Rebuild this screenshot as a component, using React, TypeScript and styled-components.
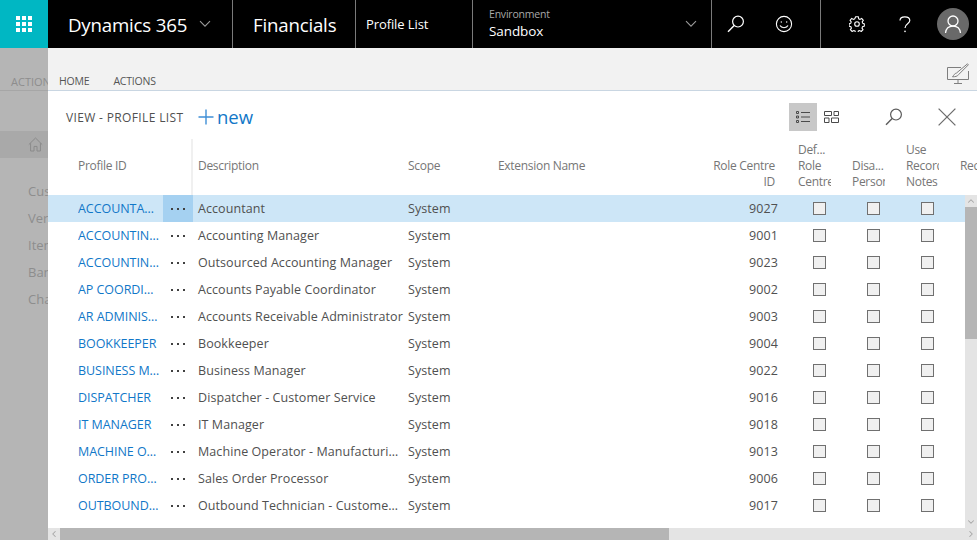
import React from 'react';
import styled, { createGlobalStyle } from 'styled-components';
import { ChevronDown, ChevronLeft, ChevronRight, ChevronUp } from 'lucide-react';

const FONT = '"Open Sans", "Noto Sans", "Liberation Sans", sans-serif';
const COLUMNS = '30px 85px 30px 215px 90px 200px 80px 14px 54px 54px 54px 23px';

/* Style Section */

const GlobalStyle = createGlobalStyle`
  html, body {
    margin: 0;
    height: 100%;
    overflow: hidden;
    background: #ffffff;
    font-family: ${FONT};
  }
  * {
    box-sizing: border-box;
  }
`;

const Page = styled.div`
  width: 977px;
  height: 540px;
  display: flex;
  flex-direction: column;
  overflow: hidden;
`;

const TopBar = styled.header`
  height: 48px;
  flex: none;
  display: flex;
  background: #000000;
  color: #ffffff;
`;

const AppsButton = styled.div`
  width: 48px;
  background: #00b7c3;
  display: flex;
  align-items: center;
  justify-content: center;
`;

const BarCell = styled.div<{ $width: number; $left?: number; $divider?: boolean }>`
  width: ${(p) => p.$width}px;
  padding-left: ${(p) => p.$left ?? 0}px;
  display: flex;
  align-items: center;
  border-right: ${(p) => (p.$divider ? '1px solid #7a7a7a' : 'none')};
  flex: none;
`;

const BrandText = styled.span`
  font-size: 18.7px;
  letter-spacing: -0.2px;
`;

const PageName = styled.span`
  font-size: 13px;
  font-weight: 500;
  letter-spacing: -0.1px;
`;

const EnvironmentBox = styled.div`
  flex: 1;
  display: flex;
  flex-direction: column;
`;

const EnvironmentLabel = styled.span`
  font-size: 10.5px;
  line-height: 14px;
  color: #a8a8a8;
  letter-spacing: -0.2px;
`;

const EnvironmentValue = styled.span`
  font-size: 13.5px;
  line-height: 20px;
  letter-spacing: -0.1px;
`;

const Avatar = styled.div`
  width: 32px;
  height: 32px;
  border-radius: 50%;
  background: #696969;
  display: flex;
  align-items: center;
  justify-content: center;
`;

const IconSlot = styled.div<{ $width: number; $before?: number }>`
  width: ${(p) => p.$width}px;
  margin-left: ${(p) => p.$before ?? 0}px;
  display: flex;
  justify-content: center;
  align-items: center;
  flex: none;
`;

const Workspace = styled.div`
  flex: 1;
  display: flex;
  min-height: 0;
`;

const Sidebar = styled.aside`
  width: 48px;
  flex: none;
  background: #b5b5b5;
  color: #8d8d8d;
  overflow: hidden;
  display: flex;
  flex-direction: column;
`;

const SideTabs = styled.div`
  height: 43px;
  flex: none;
  padding: 26px 0 0 11px;
  font-size: 11px;
  line-height: 15px;
  white-space: nowrap;
  border-bottom: 1px solid #a6a6a6;
`;

const SideHome = styled.div`
  height: 27px;
  margin-top: 40px;
  flex: none;
  background: #a9a9a9;
  display: flex;
  align-items: center;
  padding-left: 28px;
`;

const SideList = styled.div`
  margin-top: 20px;
  display: flex;
  flex-direction: column;
`;

const SideItem = styled.div`
  height: 27px;
  line-height: 27px;
  padding-left: 28px;
  font-size: 13px;
  white-space: nowrap;
`;

const Main = styled.main`
  flex: 1;
  min-width: 0;
  display: flex;
  flex-direction: column;
`;

const Ribbon = styled.div`
  height: 43px;
  flex: none;
  background: #f2f2f2;
  border-bottom: 1px solid #c9d6e2;
  display: flex;
  align-items: flex-end;
  padding: 0 8px 0 11px;
  gap: 24px;
  color: #555555;
`;

const RibbonTab = styled.span`
  font-size: 10.5px;
  line-height: 15px;
  letter-spacing: -0.2px;
  padding-bottom: 1px;
`;

const RibbonTool = styled.div`
  margin-left: auto;
  align-self: flex-end;
  margin-bottom: 5px;
  display: flex;
`;

const Toolbar = styled.div`
  height: 46px;
  flex: none;
  display: flex;
  align-items: center;
  padding: 6px 0 0 18px;
`;

const ViewTitle = styled.span`
  font-size: 12px;
  letter-spacing: 0.35px;
  color: #505050;
  width: 132px;
`;

const NewButton = styled.div`
  display: flex;
  align-items: center;
  gap: 3px;
  color: #1177c8;
  font-size: 18.5px;
  line-height: 24px;
`;

const ToolGroup = styled.div`
  margin-left: auto;
  padding-right: 21px;
  display: flex;
  align-items: center;
`;

const ViewToggle = styled.div<{ $active?: boolean }>`
  width: 28px;
  height: 28px;
  background: ${(p) => (p.$active ? '#c8c8c8' : 'transparent')};
  display: flex;
  align-items: center;
  justify-content: center;
`;

const HeaderRow = styled.div`
  height: 58px;
  flex: none;
  display: grid;
  grid-template-columns: ${COLUMNS};
  align-items: center;
  overflow: hidden;
  color: #767676;
  font-size: 12px;
  line-height: 16px;
`;

const HeaderCell = styled.div<{ $col: number; $right?: boolean; $pad?: number; $clip?: number; $low?: boolean }>`
  grid-column: ${(p) => p.$col};
  grid-row: 1;
  text-align: ${(p) => (p.$right ? 'right' : 'left')};
  padding-left: ${(p) => p.$pad ?? 0}px;
  padding-right: ${(p) => (p.$right ? 3 : 0)}px;
  white-space: pre-line;
  letter-spacing: -0.3px;
  overflow: hidden;
  ${(p) => (p.$low ? 'align-self: end; margin-bottom: 5px;' : '')}
  ${(p) => (p.$clip ? `max-width: ${p.$clip}px; margin-left: 6px; padding-left: 0; white-space: pre;` : '')}
`;

const FreezeLine = styled.div`
  grid-column: 3;
  grid-row: 1;
  justify-self: end;
  width: 2px;
  height: 56px;
  margin-top: 2px;
  background: #f0f0f0;
`;

const TableArea = styled.div`
  flex: 1;
  min-height: 0;
  display: flex;
`;

const Rows = styled.div`
  flex: 1;
  min-width: 0;
  overflow: hidden;
`;

const Row = styled.div<{ $selected?: boolean }>`
  height: 27px;
  display: grid;
  grid-template-columns: ${COLUMNS};
  align-items: center;
  background: ${(p) => (p.$selected ? '#cde6f7' : 'transparent')};
  color: #505050;
  font-size: 12.5px;
  letter-spacing: 0.08px;
`;

const IdCell = styled.a`
  grid-column: 2;
  color: #1177c8;
  letter-spacing: -0.05px;
  white-space: nowrap;
  overflow: hidden;
`;

const DotsCell = styled.div<{ $selected?: boolean }>`
  grid-column: 3;
  height: 27px;
  display: flex;
  align-items: center;
  justify-content: center;
  gap: 4px;
  background: ${(p) => (p.$selected ? '#a5d1f1' : 'transparent')};
`;

const Dot = styled.span`
  width: 2px;
  height: 2px;
  background: #404040;
`;

const TextCell = styled.div<{ $col: number; $pad?: number }>`
  grid-column: ${(p) => p.$col};
  padding-left: ${(p) => p.$pad ?? 0}px;
  white-space: nowrap;
  overflow: hidden;
`;

const NumberCell = styled.div`
  grid-column: 7;
  text-align: right;
`;

const CheckCell = styled.div<{ $col: number }>`
  grid-column: ${(p) => p.$col};
  display: flex;
  justify-content: center;
`;

const CheckBox = styled.span`
  width: 13px;
  height: 13px;
  border: 1px solid #707070;
  background: #f0f0f0;
`;

const VerticalBar = styled.div`
  width: 12px;
  flex: none;
  background: #e4e4e4;
  display: flex;
  flex-direction: column;
`;

const HorizontalBar = styled.div`
  height: 12px;
  flex: none;
  background: #e4e4e4;
  display: flex;
`;

const ArrowButton = styled.div`
  width: 12px;
  height: 12px;
  flex: none;
  display: flex;
  align-items: center;
  justify-content: center;
  color: #a6a6a6;
`;

const VerticalThumb = styled.div`
  height: 132px;
  background: #b5b5b5;
`;

const HorizontalThumb = styled.div`
  width: 609px;
  background: #b5b5b5;
`;

const Spacer = styled.div`
  flex: 1;
`;

const Waffle = () => (
  <svg width="16" height="16" viewBox="0 0 16 16" fill="#ffffff">
    {[0, 6, 12].flatMap((y) =>
      [0, 6, 12].map((x) => <rect key={`${x}-${y}`} x={x} y={y} width="4" height="4" />),
    )}
  </svg>
);

const SearchGlass = ({ color = '#ffffff' }: { color?: string }) => (
  <svg width="18" height="18" viewBox="0 0 18 18" fill="none" stroke={color} strokeWidth="1.2">
    <circle cx="11" cy="6.6" r="5.4" />
    <path d="M7.2 10.6 L1 16.8" strokeWidth="1.4" />
  </svg>
);

const Chevron = () => (
  <svg width="12" height="8" viewBox="0 0 12 8" fill="none" stroke="#9a9a9a" strokeWidth="1.1">
    <path d="M1 1.2 L6 6.2 L11 1.2" />
  </svg>
);

const Smiley = () => (
  <svg width="18" height="18" viewBox="0 0 18 18" fill="none" stroke="#ffffff" strokeWidth="1.1">
    <circle cx="9" cy="9" r="7.6" />
    <circle cx="6.3" cy="7" r="0.7" fill="#ffffff" stroke="none" />
    <circle cx="11.7" cy="7" r="0.7" fill="#ffffff" stroke="none" />
    <path d="M5 10.6 C6.4 13.4 11.6 13.4 13 10.6" />
  </svg>
);

const Gear = () => (
  <svg width="16" height="16" viewBox="0 0 16 16" fill="none" stroke="#ffffff" strokeWidth="1.1">
    <circle cx="8" cy="8" r="2.3" />
    <path d="M6.7 .8 h2.6 l.4 2 1.2.6 1.8-1 1.6 1.9 -1.1 1.6 .4 1.3 1.7.7 v2.3 l-1.8.6 -.5 1.3 1 1.6 -1.7 1.8 -1.7-1 -1.2.5 -.5 1.8 h-2.4 l-.5-1.8 -1.2-.5 -1.7 1 -1.7-1.8 1-1.6 -.5-1.3 -1.8-.6 v-2.3 l1.7-.7 .4-1.3 -1.1-1.6 1.6-1.9 1.8 1 1.2-.6 z" />
  </svg>
);

const Person = () => (
  <svg width="20" height="20" viewBox="0 0 20 20" fill="none" stroke="#ffffff" strokeWidth="1.3">
    <circle cx="10" cy="7" r="5" />
    <path d="M2.5 19 C3 14.5 6 12.2 10 12.2 C14 12.2 17 14.5 17.5 19" />
  </svg>
);

const HomeIcon = () => (
  <svg width="15" height="15" viewBox="0 0 15 15" fill="none" stroke="#8a8a8a" strokeWidth="1">
    <path d="M.8 7.6 L7.5 1 L14.2 7.6 M2.6 6.2 V14 H6 V9.4 H9 V14 H12.4 V6.2" />
  </svg>
);

const PersonalizeIcon = () => (
  <svg width="22" height="22" viewBox="0 0 22 22" fill="none" stroke="#7e7e7e" strokeWidth="1">
    <path d="M14 4.5 H.5 V16.5 H21.5 V8" />
    <path d="M11 16.5 V20.5 M7 20.5 H15" />
    <path d="M20.5 .8 L9.5 10 C7.5 10.5 7 12 5.5 13.8 C8 13.8 10.5 13.4 11.6 11.6 L21.4 1.8 Z" />
  </svg>
);

const ListIcon = () => (
  <svg width="14" height="12" viewBox="0 0 14 12" fill="none" stroke="#4a4a4a" strokeWidth="1">
    <path d="M.5 .5 h2 v2 h-2 z M.5 5 h2 v2 h-2 z M.5 9.5 h2 v2 h-2 z M5 1.5 H14 M5 6 H14 M5 10.5 H14" />
  </svg>
);

const TilesIcon = () => (
  <svg width="15" height="12" viewBox="0 0 15 12" fill="none" stroke="#4a4a4a" strokeWidth="1">
    <path d="M.5 .5 h7 v4 h-7 z M10 .5 h4.5 v4 h-4.5 z M.5 7 h4.5 v4.5 h-4.5 z M7.5 7 h7 v4.5 h-7 z" />
  </svg>
);

const CloseIcon = () => (
  <svg width="18" height="18" viewBox="0 0 18 18" fill="none" stroke="#6e6e6e" strokeWidth="1.3">
    <path d="M.6 .6 L17.4 17.4 M17.4 .6 L.6 17.4" />
  </svg>
);

const PlusIcon = () => (
  <svg width="16" height="16" viewBox="0 0 16 16" fill="none" stroke="#3f8fd6" strokeWidth="1.4">
    <path d="M8 .5 V15.5 M.5 8 H15.5" />
  </svg>
);

const profiles = [
  { id: 'ACCOUNTA…', description: 'Accountant', role: 9027 },
  { id: 'ACCOUNTIN…', description: 'Accounting Manager', role: 9001 },
  { id: 'ACCOUNTIN…', description: 'Outsourced Accounting Manager', role: 9023 },
  { id: 'AP COORDI…', description: 'Accounts Payable Coordinator', role: 9002 },
  { id: 'AR ADMINIS…', description: 'Accounts Receivable Administrator', role: 9003 },
  { id: 'BOOKKEEPER', description: 'Bookkeeper', role: 9004 },
  { id: 'BUSINESS M…', description: 'Business Manager', role: 9022 },
  { id: 'DISPATCHER', description: 'Dispatcher - Customer Service', role: 9016 },
  { id: 'IT MANAGER', description: 'IT Manager', role: 9018 },
  { id: 'MACHINE O…', description: 'Machine Operator - Manufacturi…', role: 9013 },
  { id: 'ORDER PRO…', description: 'Sales Order Processor', role: 9006 },
  { id: 'OUTBOUND…', description: 'Outbound Technician - Custome…', role: 9017 },
];

const sideItems = ['Cus', 'Ver', 'Item', 'Ban', 'Cha'];

const App: React.FC = () => {
  return (
    <Page>
      <GlobalStyle />
      <TopBar>
        <AppsButton>
          <Waffle />
        </AppsButton>
        <BarCell $width={185} $left={20} $divider>
          <BrandText>Dynamics 365</BrandText>
          <IconSlot $width={36}>
            <Chevron />
          </IconSlot>
        </BarCell>
        <BarCell $width={123} $left={20} $divider>
          <BrandText>Financials</BrandText>
        </BarCell>
        <BarCell $width={117} $left={10} $divider>
          <PageName>Profile List</PageName>
        </BarCell>
        <BarCell $width={239} $left={16} $divider>
          <EnvironmentBox>
            <EnvironmentLabel>Environment</EnvironmentLabel>
            <EnvironmentValue>Sandbox</EnvironmentValue>
          </EnvironmentBox>
          <IconSlot $width={40}>
            <Chevron />
          </IconSlot>
        </BarCell>
        <BarCell $width={109} $divider>
          <IconSlot $width={48}>
            <SearchGlass />
          </IconSlot>
          <IconSlot $width={47}>
            <Smiley />
          </IconSlot>
        </BarCell>
        <BarCell $width={156}>
          <IconSlot $width={72}>
            <Gear />
          </IconSlot>
          <IconSlot $width={24}>
            <svg width="12" height="17" viewBox="0 0 12 17" fill="none" stroke="#ffffff" strokeWidth="1.2">
              <path d="M1 4.6 C1 2 3 .8 5.8 .8 C8.8 .8 10.8 2.4 10.8 4.6 C10.8 8 6 7.6 6 12" />
              <circle cx="6" cy="15.4" r=".8" fill="#ffffff" stroke="none" />
            </svg>
          </IconSlot>
          <IconSlot $width={32} $before={20}>
            <Avatar>
              <Person />
            </Avatar>
          </IconSlot>
        </BarCell>
      </TopBar>
      <Workspace>
        <Sidebar>
          <SideTabs>ACTIONS</SideTabs>
          <SideHome>
            <HomeIcon />
          </SideHome>
          <SideList>
            {sideItems.map((item) => (
              <SideItem key={item}>{item}</SideItem>
            ))}
          </SideList>
        </Sidebar>
        <Main>
          <Ribbon>
            <RibbonTab>HOME</RibbonTab>
            <RibbonTab>ACTIONS</RibbonTab>
            <RibbonTool>
              <PersonalizeIcon />
            </RibbonTool>
          </Ribbon>
          <Toolbar>
            <ViewTitle>VIEW - PROFILE LIST</ViewTitle>
            <NewButton>
              <PlusIcon />
              <span>new</span>
            </NewButton>
            <ToolGroup>
              <ViewToggle $active>
                <ListIcon />
              </ViewToggle>
              <ViewToggle>
                <TilesIcon />
              </ViewToggle>
              <IconSlot $width={18} $before={40}>
                <SearchGlass color="#5a5a5a" />
              </IconSlot>
              <IconSlot $width={18} $before={35}>
                <CloseIcon />
              </IconSlot>
            </ToolGroup>
          </Toolbar>
          <HeaderRow>
            <HeaderCell $col={2}>Profile ID</HeaderCell>
            <FreezeLine />
            <HeaderCell $col={4} $pad={5}>
              Description
            </HeaderCell>
            <HeaderCell $col={5}>Scope</HeaderCell>
            <HeaderCell $col={6}>Extension Name</HeaderCell>
            <HeaderCell $col={7} $right $low>
              {'Role Centre\nID'}
            </HeaderCell>
            <HeaderCell $col={9} $clip={33}>
              {'Def...\nRole\nCentre'}
            </HeaderCell>
            <HeaderCell $col={10} $clip={33} $low>
              {'Disa...\nPersonal'}
            </HeaderCell>
            <HeaderCell $col={11} $clip={33}>
              {'Use\nRecord\nNotes'}
            </HeaderCell>
            <HeaderCell $col={12} $clip={17}>
              Record
            </HeaderCell>
          </HeaderRow>
          <TableArea>
            <Rows>
              {profiles.map((profile, index) => (
                <Row key={profile.role} $selected={index === 0}>
                  <IdCell>{profile.id}</IdCell>
                  <DotsCell $selected={index === 0}>
                    <Dot />
                    <Dot />
                    <Dot />
                  </DotsCell>
                  <TextCell $col={4} $pad={5}>
                    {profile.description}
                  </TextCell>
                  <TextCell $col={5}>System</TextCell>
                  <NumberCell>{profile.role}</NumberCell>
                  {[9, 10, 11].map((col) => (
                    <CheckCell key={col} $col={col}>
                      <CheckBox />
                    </CheckCell>
                  ))}
                </Row>
              ))}
            </Rows>
            <VerticalBar>
              <ArrowButton>
                <ChevronUp size={10} strokeWidth={2.5} />
              </ArrowButton>
              <VerticalThumb />
              <Spacer />
              <ArrowButton>
                <ChevronDown size={10} strokeWidth={2.5} />
              </ArrowButton>
            </VerticalBar>
          </TableArea>
          <HorizontalBar>
            <ArrowButton>
              <ChevronLeft size={10} strokeWidth={2.5} />
            </ArrowButton>
            <HorizontalThumb />
            <Spacer />
            <ArrowButton>
              <ChevronRight size={10} strokeWidth={2.5} />
            </ArrowButton>
          </HorizontalBar>
        </Main>
      </Workspace>
    </Page>
  );
};

export default App;
